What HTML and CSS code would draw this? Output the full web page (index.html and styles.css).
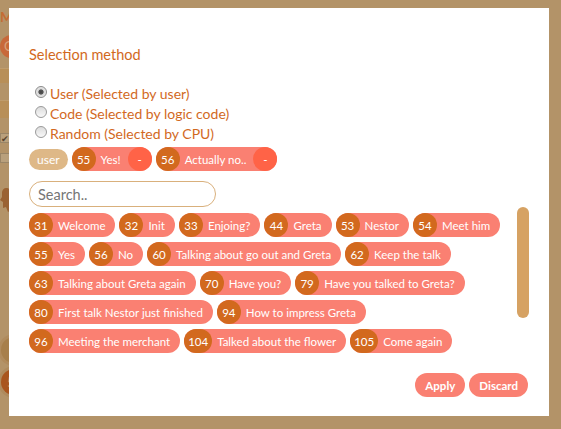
FILE: index.html
```html
<!DOCTYPE html>
<html lang="en">
<head>
<meta charset="utf-8">
<title>Selection method</title>
<link rel="stylesheet" href="styles.css">
</head>
<body>
<div class="app">
  <div class="app-title">Menu</div>
  <div class="app-avatar">C</div>
  <div class="app-band"></div>
  <div class="app-band tall"></div>
  <div class="app-check on">&#10004;</div>
  <div class="app-check"></div>
  <svg class="app-figure" width="12" height="24" viewBox="0 0 12 24"><path d="M6 0c3 0 5 2 5 5 0 2-1 3-2 4l2 3-1 4 1 6-3 2-2-5-3 1 0-6-3-2 2-3 0-5c1-3 2-4 4-4z" fill="#9a6232"/></svg>
  <div class="app-circle light"></div>
  <div class="app-circle dark">5</div>
</div>

<div class="modal">
  <h2 class="modal-title">Selection method</h2>
  <div class="radios">
    <label class="radio"><input type="radio" name="method" checked><span>User (Selected by user)</span></label>
    <label class="radio"><input type="radio" name="method"><span>Code (Selected by logic code)</span></label>
    <label class="radio"><input type="radio" name="method"><span>Random (Selected by CPU)</span></label>
  </div>
  <div class="selected">
    <span class="tag-user">user</span>
    <span class="chip removable"><span class="num">55</span><span class="label">Yes!</span><span class="remove">-</span></span>
    <span class="chip removable"><span class="num">56</span><span class="label">Actually no..</span><span class="remove">-</span></span>
  </div>
  <input class="search" type="text" placeholder="Search..">
  <div class="list-wrap">
    <div class="chips">
      <span class="chip"><span class="num">31</span><span class="label">Welcome</span></span>
      <span class="chip"><span class="num">32</span><span class="label">Init</span></span>
      <span class="chip"><span class="num">33</span><span class="label">Enjoing?</span></span>
      <span class="chip"><span class="num">44</span><span class="label">Greta</span></span>
      <span class="chip"><span class="num">53</span><span class="label">Nestor</span></span>
      <span class="chip"><span class="num">54</span><span class="label">Meet him</span></span>
      <span class="chip"><span class="num">55</span><span class="label">Yes</span></span>
      <span class="chip"><span class="num">56</span><span class="label">No</span></span>
      <span class="chip"><span class="num">60</span><span class="label">Talking about go out and Greta</span></span>
      <span class="chip"><span class="num">62</span><span class="label">Keep the talk</span></span>
      <span class="chip"><span class="num">63</span><span class="label">Talking about Greta again</span></span>
      <span class="chip"><span class="num">70</span><span class="label">Have you?</span></span>
      <span class="chip"><span class="num">79</span><span class="label">Have you talked to Greta?</span></span>
      <span class="chip"><span class="num">80</span><span class="label">First talk Nestor just finished</span></span>
      <span class="chip"><span class="num">94</span><span class="label">How to impress Greta</span></span>
      <span class="chip"><span class="num">96</span><span class="label">Meeting the merchant</span></span>
      <span class="chip"><span class="num">104</span><span class="label">Talked about the flower</span></span>
      <span class="chip"><span class="num">105</span><span class="label">Come again</span></span>
    </div>
    <div class="scrollbar"><div class="thumb"></div></div>
  </div>
  <div class="actions">
    <button class="btn">Apply</button>
    <button class="btn">Discard</button>
  </div>
</div>
</body>
</html>
```

FILE: styles.css
```css
* { box-sizing: border-box; }

html, body {
  margin: 0;
  width: 561px;
  height: 429px;
  overflow: hidden;
}

body {
  background: #b39368;
  font-family: Lato, "Open Sans", sans-serif;
  position: relative;
}

/* background app (mostly hidden behind the modal) */
.app {
  display: flex;
  flex-direction: column;
  align-items: flex-start;
  padding-top: 10px;
}

.app-title {
  font-size: 14px;
  line-height: 14px;
  font-weight: 700;
  color: #c46d35;
}

.app-avatar {
  margin-top: 11px;
  width: 23px;
  height: 23px;
  border-radius: 50%;
  background: #c8693a;
  color: #d9a27a;
  font-size: 13px;
  line-height: 23px;
  padding-left: 4px;
}

.app-band {
  margin-top: 10px;
  width: 40px;
  height: 15px;
  background: #b88f58;
  border-top: 1px solid #bf9c6c;
}

.app-band.tall {
  margin-top: 17px;
  height: 18px;
}

.app-check {
  margin-top: 15px;
  width: 10px;
  height: 10px;
  border: 1px solid #9a8566;
  background: #b9a07c;
  font-size: 9px;
  line-height: 9px;
  color: #5a4630;
}

.app-check + .app-check {
  margin-top: 10px;
}

.app-figure {
  margin-top: 25px;
  margin-left: 0;
}

.app-circle {
  width: 26px;
  height: 26px;
  border-radius: 50%;
  margin-left: 1px;
}

.app-circle.light {
  margin-top: 125px;
  background: #a77f4b;
  box-shadow: 0 0 0 3px #b08b5d;
}

.app-circle.dark {
  margin-top: 6px;
  background: #a9551d;
  box-shadow: 0 0 0 3px #af8a5c;
  color: #c99a5a;
  font-size: 13px;
  line-height: 26px;
  padding-left: 6px;
}

/* modal */
.modal {
  position: absolute;
  left: 9px;
  top: 8px;
  width: 540px;
  height: 408px;
  background: #ffffff;
  padding: 38px 20px 19px 20px;
  display: flex;
  flex-direction: column;
  align-items: flex-start;
}

.modal-title {
  margin: 0;
  font-size: 14.5px;
  line-height: 18px;
  font-weight: 400;
  color: #d2691e;
}

.radios {
  margin-top: 19px;
  display: flex;
  flex-direction: column;
}

.radio {
  display: flex;
  align-items: center;
  height: 20px;
  font-size: 14px;
  color: #d2691e;
}

.radio input {
  -webkit-appearance: none;
  appearance: none;
  width: 12px;
  height: 12px;
  margin: 0 3px 3px 6px;
  border-radius: 50%;
  border: 1px solid #9a9a9a;
  background: linear-gradient(#dcdcdc, #f8f8f8);
}

.radio input:checked {
  background: radial-gradient(circle, #444 0, #555 2.2px, #d8d8d8 3px, #f6f6f6 100%);
  border-color: #8a8a8a;
}

.selected {
  margin-top: 4px;
  display: flex;
  align-items: center;
  gap: 4px;
}

.tag-user {
  height: 21px;
  line-height: 21px;
  padding: 0 8px;
  border-radius: 11px;
  background: #deb887;
  color: #ffffff;
  font-size: 12px;
}

.chip {
  display: inline-flex;
  align-items: center;
  height: 24px;
  border-radius: 12px;
  background: #fa8072;
  color: #ffffff;
  font-size: 11.5px;
  padding-right: 10px;
  white-space: nowrap;
}

.chip.removable {
  padding-right: 0;
}

.num {
  min-width: 24px;
  height: 24px;
  padding: 0 4px;
  border-radius: 12px;
  background: #d2691e;
  display: flex;
  align-items: center;
  justify-content: center;
}

.label {
  margin-left: 5px;
}

.remove {
  margin-left: 7px;
  width: 24px;
  height: 24px;
  border-radius: 50%;
  background: #ff6347;
  display: flex;
  align-items: center;
  justify-content: center;
}

.search {
  margin-top: 10px;
  width: 187px;
  height: 26px;
  border: 1px solid #d9b07c;
  border-radius: 13px;
  padding: 0 8px;
  font-family: Lato, "Open Sans", sans-serif;
  font-size: 14.5px;
  color: #333;
  outline: none;
}

.search::placeholder {
  color: #757575;
}

.list-wrap {
  width: 100%;
  height: 150px;
  display: flex;
}

.chips {
  flex: 1;
  height: 150px;
  overflow: hidden;
  padding-top: 6px;
  display: flex;
  flex-wrap: wrap;
  align-content: flex-start;
  gap: 5px 4px;
}

.scrollbar {
  width: 12px;
  margin-left: 10px;
}

.thumb {
  width: 12px;
  height: 111px;
  border-radius: 6px;
  background: #d6a263;
}

.actions {
  margin-top: 16px;
  align-self: stretch;
  display: flex;
  justify-content: flex-end;
  gap: 4px;
  padding-right: 1px;
}

.btn {
  height: 24px;
  padding: 0 10px;
  border: none;
  border-radius: 12px;
  background: #fa8072;
  color: #ffffff;
  font-family: Lato, "Open Sans", sans-serif;
  font-size: 11.5px;
  font-weight: 700;
}
```
